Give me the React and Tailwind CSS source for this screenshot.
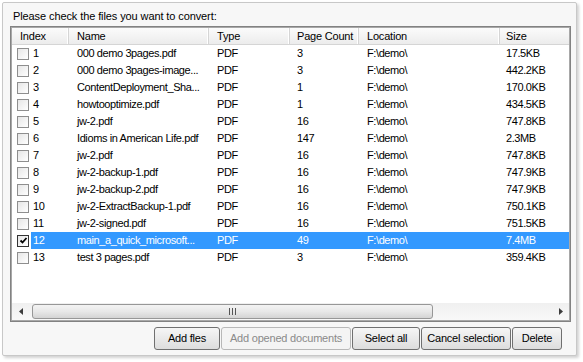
import React from "react"

const rows = [
  ["1", "000 demo 3pages.pdf", "3", "17.5KB"],
  ["2", "000 demo 3pages-image...", "3", "442.2KB"],
  ["3", "ContentDeployment_Sha...", "1", "170.0KB"],
  ["4", "howtooptimize.pdf", "1", "434.5KB"],
  ["5", "jw-2.pdf", "16", "747.8KB"],
  ["6", "Idioms in American Life.pdf", "147", "2.3MB"],
  ["7", "jw-2.pdf", "16", "747.8KB"],
  ["8", "jw-2-backup-1.pdf", "16", "747.9KB"],
  ["9", "jw-2-backup-2.pdf", "16", "747.9KB"],
  ["10", "jw-2-ExtractBackup-1.pdf", "16", "750.1KB"],
  ["11", "jw-2-signed.pdf", "16", "751.5KB"],
  ["12", "main_a_quick_microsoft...", "49", "7.4MB"],
  ["13", "test 3 pages.pdf", "3", "359.4KB"],
]

const Checkbox = ({ checked }) => (
  <div className={`w-[12px] h-[12px] border bg-gradient-to-br from-[#e6e6e6] to-white shrink-0 flex items-center justify-center ${checked ? "border-[#333]" : "border-[#8e8e8e]"}`}>
    {checked && (
      <svg width="9" height="9" viewBox="0 0 9 9">
        <path d="M1.5 4.5 L3.5 6.5 L7.5 2" stroke="#000" strokeWidth="1.8" fill="none" />
      </svg>
    )}
  </div>
)

const HeaderCell = ({ w, children }) => (
  <div className={`${w} h-full pl-[8px] flex items-center border-r border-[#d5d5d5] shadow-[inset_-1px_0_0_#fff]`}>
    {children}
  </div>
)

const Btn = ({ w, disabled, children }) => (
  <button
    className={`${w} h-[23px] rounded-[3px] border text-[11px] tracking-[-0.2px] ${
      disabled
        ? "border-[#b8b8b8] bg-[#f4f4f4] text-[#8a8a8a]"
        : "border-[#707070] bg-gradient-to-b from-[#f6f6f6] to-[#dddddd] text-black"
    }`}
  >
    {children}
  </button>
)

export default function App() {
  return (
    <div className="w-[583px] h-[362px] bg-white pl-[2px] pt-[2px] text-[11px] text-black font-['Liberation_Sans',Arial,sans-serif]">
      <div className="w-[575px] h-[354px] border border-[#c8c8c8] rounded-[2px] bg-[#f7f7f7] shadow-[2px_2px_3px_rgba(0,0,0,0.18)] flex flex-col">
        <div className="pl-[10px] pt-[6px] leading-[14px] h-[20px] tracking-[-0.1px]">Please check the files you want to convert:</div>
        <div className="ml-[7px] mt-[3px] w-[561px] h-[296px] border border-[#828282] bg-white">
          <div className="w-full h-full border border-[#a8a8a8] flex flex-col">
            <div className="h-[17px] flex bg-gradient-to-b from-[#fbfbfb] to-[#ececec] border-b border-[#d5d5d5] tracking-[-0.2px]">
              <HeaderCell w="w-[57px]">Index</HeaderCell>
              <HeaderCell w="w-[140px]">Name</HeaderCell>
              <HeaderCell w="w-[81px]">Type</HeaderCell>
              <div className="w-[69px] h-full pl-[7px] flex items-center border-r border-[#d5d5d5] shadow-[inset_-1px_0_0_#fff]">Page Count</div>
              <HeaderCell w="w-[141px]">Location</HeaderCell>
              <div className="w-[68px] h-full pl-[6px] flex items-center">Size</div>
            </div>
            <div className="flex-1 tracking-[-0.4px]">
              {rows.map(([idx, name, pages, size]) => {
                const sel = idx === "12"
                return (
                  <div key={idx} className="h-[17px] flex items-center">
                    <div className="pl-[5px] pr-[2px] flex items-center">
                      <Checkbox checked={sel} />
                    </div>
                    <div className={`flex-1 h-full flex items-center ${sel ? "bg-[#3399ff] text-white" : ""}`}>
                      <div className="w-[38px] pl-[2px]">{idx}</div>
                      <div className="w-[140px] pl-[8px] whitespace-nowrap">{name}</div>
                      <div className="w-[81px] pl-[8px]">PDF</div>
                      <div className="w-[69px] pl-[7px]">{pages}</div>
                      <div className="w-[141px] pl-[8px]">F:\demo\</div>
                      <div className="w-[68px] pl-[6px]">{size}</div>
                    </div>
                  </div>
                )
              })}
            </div>
            <div className="h-[17px] flex items-center bg-gradient-to-b from-[#f0f0f0] to-[#f8f8f8]">
              <div className="w-[17px] h-full flex items-center justify-center">
                <svg width="4" height="7" viewBox="0 0 4 7"><path d="M4 0 L0 3.5 L4 7 Z" fill="#3c3c3c" /></svg>
              </div>
              <div className="ml-[3px] w-[401px] h-[15px] rounded-[3px] border border-[#979797] bg-gradient-to-b from-[#f3f3f3] via-[#e8e8e8] to-[#d4d4d4] flex items-center justify-center">
                <svg width="7" height="7" viewBox="0 0 7 7">
                  <path d="M0.5 0 V7 M3.5 0 V7 M6.5 0 V7" stroke="#555" strokeWidth="1" />
                </svg>
              </div>
              <div className="flex-1" />
              <div className="w-[17px] h-full flex items-center justify-center">
                <svg width="4" height="7" viewBox="0 0 4 7"><path d="M0 0 L4 3.5 L0 7 Z" fill="#3c3c3c" /></svg>
              </div>
            </div>
          </div>
        </div>
        <div className="mt-[5px] ml-[151px] flex gap-[1px]">
          <Btn w="w-[66px]">Add fles</Btn>
          <Btn w="w-[130px]" disabled>Add opened documents</Btn>
          <Btn w="w-[68px]">Select all</Btn>
          <Btn w="w-[90px]">Cancel selection</Btn>
          <Btn w="w-[50px]">Delete</Btn>
        </div>
      </div>
    </div>
  )
}
